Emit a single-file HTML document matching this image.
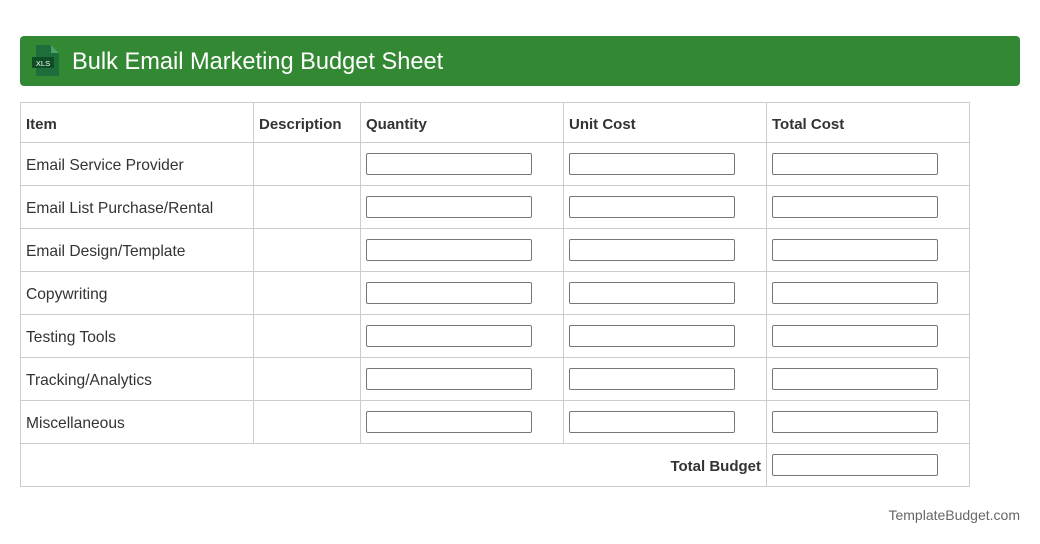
<!DOCTYPE html>
<html><head><meta charset="utf-8"><style>
body{margin:0;width:1040px;height:544px;background:#fff;font-family:"Liberation Sans",Arial,sans-serif;color:#333;position:relative;overflow:hidden}
.hd{position:absolute;left:20px;top:36px;width:1000px;height:50px;background:#338833;border-radius:4px}
.hd .t{position:absolute;left:52px;top:11px;font-size:23.6px;color:#fff;line-height:30px}
.hd svg{position:absolute;left:12px;top:9px}
table{position:absolute;left:20px;top:102px;border-collapse:collapse;font-size:15.6px}
td,th{border:1px solid #ccc;padding:3px 5px 0;text-align:left;height:42px;box-sizing:border-box}
th{height:40px;font-weight:bold;font-size:15px}
td .i{margin-top:-3px}
.i{display:block;width:166px;height:22px;border:1px solid #767676;border-radius:2px;box-sizing:border-box}
.f{position:absolute;right:20px;top:507px;font-size:14px;color:#666}
</style></head><body>
<div class="hd"><svg width="28" height="31" viewBox="0 0 28 31"><path d="M4 0H19L27 8V31H4Z" fill="#1d6e3a"/><path d="M19 0V8H27Z" fill="#4aa36a"/><rect x="0" y="12" width="22" height="11" fill="#0e4d26"/><text x="11" y="21" font-size="7.5" fill="#fff" text-anchor="middle" font-family="Liberation Sans">XLS</text></svg><div class="t">Bulk Email Marketing Budget Sheet</div></div>
<table>
<colgroup><col style="width:233px"><col style="width:107px"><col style="width:203px"><col style="width:203px"><col style="width:203px"></colgroup>
<tr><th>Item</th><th>Description</th><th>Quantity</th><th>Unit Cost</th><th>Total Cost</th></tr>
<tr style="height:43px"><td>Email Service Provider</td><td></td><td><span class="i"></span></td><td><span class="i"></span></td><td><span class="i"></span></td></tr>
<tr style="height:43px"><td>Email List Purchase/Rental</td><td></td><td><span class="i"></span></td><td><span class="i"></span></td><td><span class="i"></span></td></tr>
<tr style="height:43px"><td>Email Design/Template</td><td></td><td><span class="i"></span></td><td><span class="i"></span></td><td><span class="i"></span></td></tr>
<tr style="height:43px"><td>Copywriting</td><td></td><td><span class="i"></span></td><td><span class="i"></span></td><td><span class="i"></span></td></tr>
<tr style="height:43px"><td>Testing Tools</td><td></td><td><span class="i"></span></td><td><span class="i"></span></td><td><span class="i"></span></td></tr>
<tr style="height:43px"><td>Tracking/Analytics</td><td></td><td><span class="i"></span></td><td><span class="i"></span></td><td><span class="i"></span></td></tr>
<tr style="height:43px"><td>Miscellaneous</td><td></td><td><span class="i"></span></td><td><span class="i"></span></td><td><span class="i"></span></td></tr>
<tr style="height:43px"><td colspan="4" style="text-align:right;font-weight:bold;font-size:15px">Total Budget</td><td><span class="i"></span></td></tr>
</table>
<div class="f">TemplateBudget.com</div>
</body></html>
